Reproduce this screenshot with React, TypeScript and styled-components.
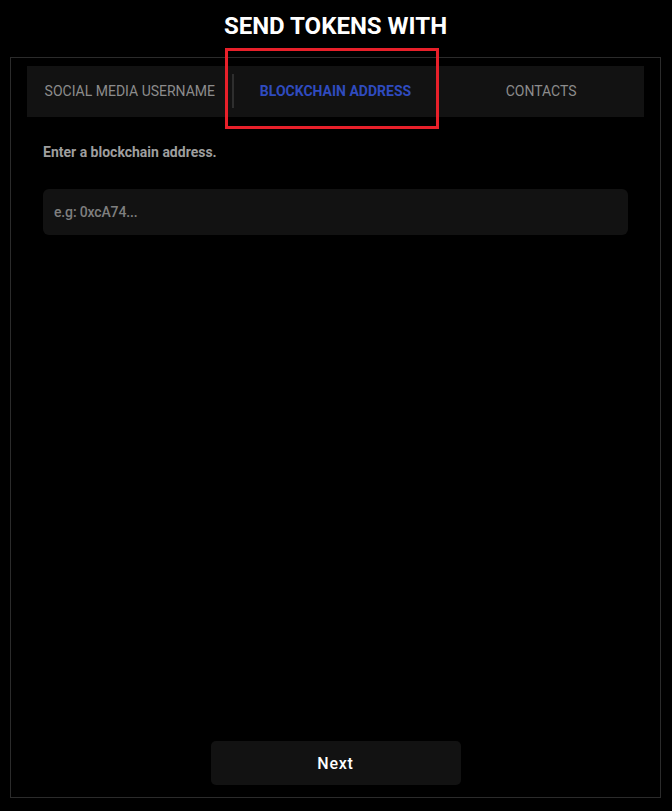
import React from "react";
import styled, { createGlobalStyle } from "styled-components";

const Global = createGlobalStyle`
  html, body { margin: 0; padding: 0; background: #000; }
  body { font-family: Roboto, "Noto Sans", Arial, sans-serif; }
  * { box-sizing: border-box; }
`;

const Page = styled.div`
  width: 672px;
  height: 811px;
  background: #000;
  display: flex;
  flex-direction: column;
  padding: 11px 0 13px 10px;
`;

const Title = styled.h1`
  margin: 0;
  width: 651px;
  text-align: center;
  height: 30px;
  font-size: 24px;
  line-height: 30px;
  font-weight: 700;
  color: #fff;
  letter-spacing: 0;
`;

const Panel = styled.section`
  margin-top: 16px;
  width: 651px;
  flex: 1;
  border: 1px solid #2b2b2b;
  display: flex;
  flex-direction: column;
  padding: 8px 16px 12px 16px;
`;

const TabWrap = styled.div`
  position: relative;
`;

const TabBar = styled.div`
  display: grid;
  grid-template-columns: repeat(3, 1fr);
  height: 51px;
  background: #121212;
`;

const Tab = styled.button<{ $active?: boolean; $divider?: boolean }>`
  all: unset;
  display: flex;
  align-items: center;
  justify-content: center;
  padding-bottom: 2px;
  position: relative;
  font-family: Roboto, Arial, sans-serif;
  font-size: 14px;
  font-weight: ${(p) => (p.$active ? 700 : 400)};
  color: ${(p) => (p.$active ? "#2f4bbf" : "#8c8c8c")};
  cursor: pointer;
  &::before {
    content: "";
    display: ${(p) => (p.$divider ? "block" : "none")};
    position: absolute;
    left: -1px;
    top: 8px;
    bottom: 9px;
    width: 2px;
    background: #2e2e2e;
  }
`;

const Highlight = styled.div`
  position: absolute;
  left: 198px;
  top: -18px;
  width: 214px;
  height: 81px;
  border: 3px solid #e8202a;
  pointer-events: none;
`;

const Body = styled.div`
  flex: 1;
  padding: 27px 16px 0 16px;
  display: flex;
  flex-direction: column;
`;

const Label = styled.label`
  font-size: 14px;
  font-weight: 700;
  color: #9e9e9e;
  line-height: 16px;
`;

const Input = styled.input`
  margin-top: 29px;
  height: 46px;
  width: 100%;
  border: none;
  outline: none;
  border-radius: 6px;
  background: #121212;
  padding: 0 11px;
  font-family: Roboto, Arial, sans-serif;
  font-size: 14px;
  font-weight: 500;
  letter-spacing: -0.15px;
  color: #ddd;
  &::placeholder { color: #7f7f7f; }
`;

const Footer = styled.div`
  display: flex;
  justify-content: center;
`;

const NextButton = styled.button`
  width: 250px;
  height: 44px;
  border: none;
  border-radius: 5px;
  background: #121212;
  color: #fff;
  font-family: Roboto, Arial, sans-serif;
  font-size: 16px;
  font-weight: 500;
  letter-spacing: 0.8px;
  cursor: pointer;
`;

export default function App() {
  return (
    <>
      <Global />
      <Page>
        <Title>SEND TOKENS WITH</Title>
        <Panel>
          <TabWrap>
            <TabBar>
              <Tab>SOCIAL MEDIA USERNAME</Tab>
              <Tab $active $divider>BLOCKCHAIN ADDRESS</Tab>
              <Tab>CONTACTS</Tab>
            </TabBar>
            <Highlight />
          </TabWrap>
          <Body>
            <Label>Enter a blockchain address.</Label>
            <Input placeholder="e.g: 0xcA74..." />
          </Body>
          <Footer>
            <NextButton>Next</NextButton>
          </Footer>
        </Panel>
      </Page>
    </>
  );
}
